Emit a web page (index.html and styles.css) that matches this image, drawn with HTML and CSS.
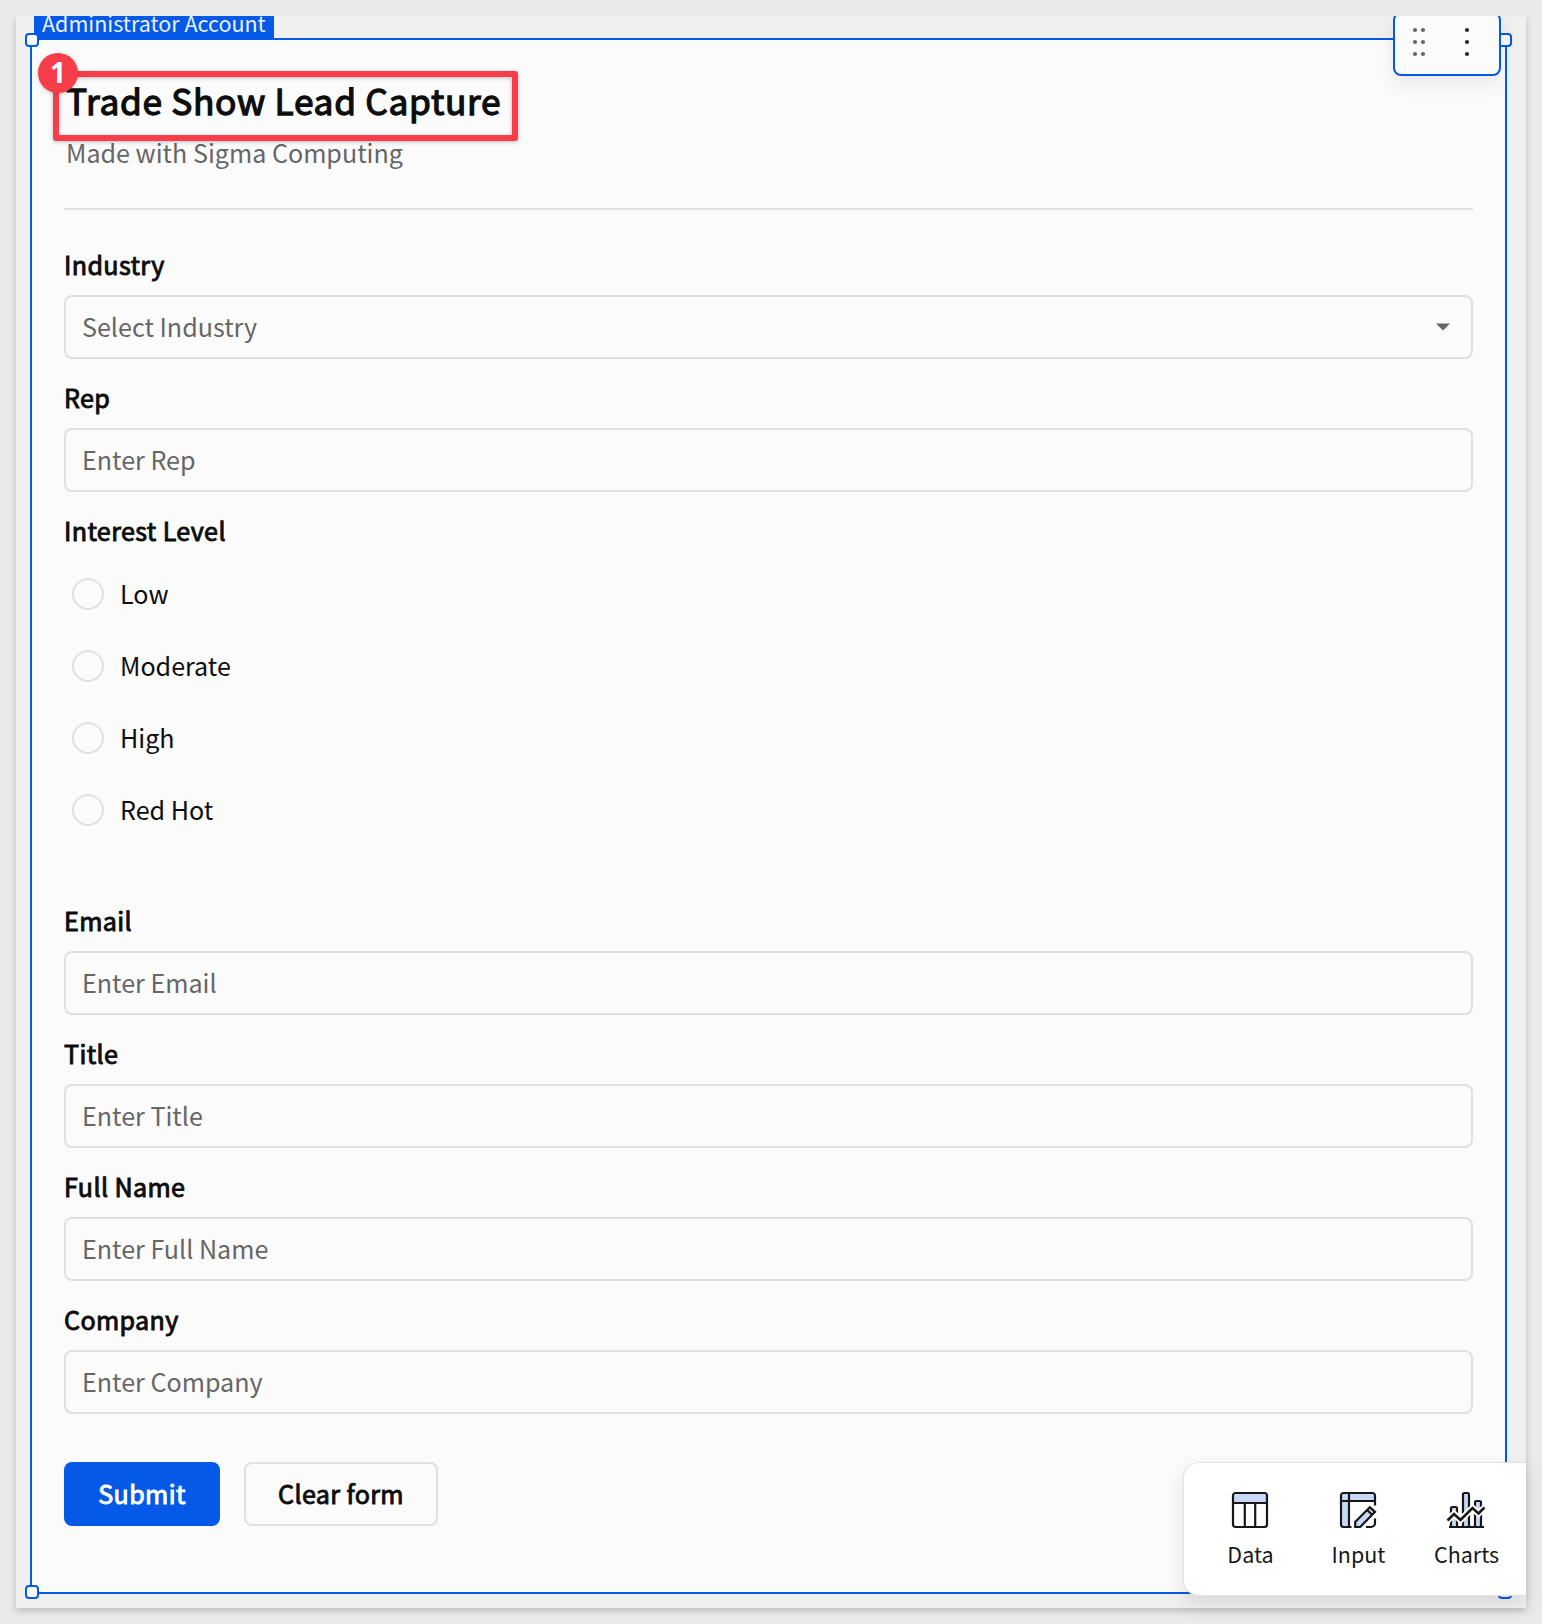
FILE: index.html
```html
<!DOCTYPE html>
<html lang="en">
<head>
<meta charset="utf-8">
<title>Trade Show Lead Capture</title>
<link rel="stylesheet" href="styles.css">
</head>
<body>
<main class="canvas">
  <div class="tag"><span class="tag-text">Administrator Account</span></div>
  <section class="panel">
    <span class="handle handle-tl"></span>
    <span class="handle handle-tr"></span>
    <span class="handle handle-bl"></span>
    <span class="handle handle-br"></span>

    <header class="head">
      <h1 class="title"><span>Trade Show Lead Capture</span></h1>
      <p class="subtitle"><span>Made with Sigma Computing</span></p>
    </header>

    <form class="form">
      <div class="field">
        <div class="label"><span>Industry</span></div>
        <div class="control"><span>Select Industry</span>
          <svg class="caret" width="14" height="8" viewBox="0 0 14 8"><path d="M0 0.500h14L7 7.500z" fill="#666"/></svg>
        </div>
      </div>
      <div class="field">
        <div class="label"><span>Rep</span></div>
        <div class="control"><span>Enter Rep</span></div>
      </div>
      <div class="field field-radios">
        <div class="label"><span>Interest Level</span></div>
        <div class="radios">
          <div class="radio"><i class="dot"></i><span>Low</span></div>
          <div class="radio"><i class="dot"></i><span>Moderate</span></div>
          <div class="radio"><i class="dot"></i><span>High</span></div>
          <div class="radio"><i class="dot"></i><span>Red Hot</span></div>
        </div>
      </div>
      <div class="field">
        <div class="label"><span>Email</span></div>
        <div class="control"><span>Enter Email</span></div>
      </div>
      <div class="field">
        <div class="label"><span>Title</span></div>
        <div class="control"><span>Enter Title</span></div>
      </div>
      <div class="field">
        <div class="label"><span>Full Name</span></div>
        <div class="control"><span>Enter Full Name</span></div>
      </div>
      <div class="field">
        <div class="label"><span>Company</span></div>
        <div class="control"><span>Enter Company</span></div>
      </div>
      <div class="actions">
        <button type="button" class="btn btn-primary"><span>Submit</span></button>
        <button type="button" class="btn btn-outline"><span>Clear form</span></button>
      </div>
    </form>
  </section>

  <div class="menu">
    <svg width="104" height="58" viewBox="0 0 104 58">
      <g fill="#666"><circle cx="20" cy="14" r="2.1"/><circle cx="28" cy="14" r="2.1"/><circle cx="20" cy="26" r="2.1"/><circle cx="28" cy="26" r="2.1"/><circle cx="20" cy="38" r="2.1"/><circle cx="28" cy="38" r="2.1"/></g>
      <g fill="#292929"><circle cx="72" cy="14" r="2.1"/><circle cx="72" cy="26" r="2.1"/><circle cx="72" cy="38" r="2.1"/></g>
    </svg>
  </div>

  <nav class="palette">
    <div class="tool">
      <svg class="icon" width="40" height="40" viewBox="0 0 40 40" fill="none" stroke="#171717" stroke-width="2.2">
        <path d="M3 13V5.500a2.500 2.500 0 0 1 2.500-2.500h29A2.500 2.500 0 0 1 37 5.500V13z" fill="#c8d8f8" stroke="none"/>
        <rect x="3" y="3" width="34" height="34" rx="2.500"/><path d="M3 13h34M14.800 13v24M25.200 13v24"/>
      </svg>
      <span>Data</span>
    </div>
    <div class="tool">
      <svg class="icon" width="40" height="40" viewBox="0 0 40 40" fill="none" stroke="#171717" stroke-width="2.2">
        <path d="M3 5.500A2.500 2.500 0 0 1 5.500 3h29A2.500 2.500 0 0 1 37 5.500V11H11v26H5.500A2.500 2.500 0 0 1 3 34.500z" fill="#c8d8f8" stroke="none"/>
        <path d="M37 15.500V5.500A2.500 2.500 0 0 0 34.500 3h-29A2.500 2.500 0 0 0 3 5.500v29A2.500 2.500 0 0 0 5.500 37H13.500M11 3v34M3 11h34M37 28.500V33a4 4 0 0 1-4 4H28"/>
        <path d="M17.200 37v-5L31.800 17.300l5.200 4.500L22.200 37z" fill="#c8d8f8"/><path d="M29 20l5.200 4.700"/>
      </svg>
      <span>Input</span>
    </div>
    <div class="tool">
      <svg class="icon" width="40" height="40" viewBox="0 0 40 40" fill="none" stroke="#171717" stroke-width="2.2">
        <path d="M5 37V18.500a1.500 1.500 0 0 1 1.500-1.500h3a1.500 1.500 0 0 1 1.500 1.500V37zM17 37V4.500A1.500 1.500 0 0 1 18.500 3h3A1.500 1.500 0 0 1 23 4.500V37zM29 37V12.500a1.500 1.500 0 0 1 1.500-1.500h3a1.500 1.500 0 0 1 1.500 1.500V37z" fill="#c8d8f8"/>
        <path d="M3 37h35"/>
        <path d="M0 32l8-8 6.500 6L26.500 18l6 5.500 7-7" stroke="#fff" stroke-width="6.500"/>
        <path d="M1.500 30.500L8 24l6.500 6L26.500 18l6 5.500 6-6" stroke-width="2.600"/>
      </svg>
      <span>Charts</span>
    </div>
  </nav>

  <div class="callout"></div>
  <div class="badge"><span>1</span></div>
</main>
</body>
</html>
```
FILE: styles.css
```css
* { box-sizing: border-box; }
body {
  margin: 0;
  padding: 16px;
  height: 1624px;
  background: #eaeaea;
  font-family: "Noto Sans CJK SC", "Noto Sans", sans-serif;
  font-size: 25.1px;
  line-height: 36px;
  color: #0d0d0d;
  overflow: hidden;
}
.canvas {
  position: relative;
  height: 1592px;
  padding: 22px 19px 14px 14px;
  background: #f0f0f0;
  box-shadow: 0 3px 7px rgba(0,0,0,.2);
  clip-path: inset(0 -16px -16px -16px);
}
.panel {
  position: relative;
  height: 1556px;
  padding: 0 32px;
  border: 2px solid #0559e7;
  background: #fbfbfb;
}
.handle {
  position: absolute;
  width: 14px;
  height: 14px;
  border: 2px solid #0559e7;
  border-radius: 4px;
  background: #fbfbfb;
}
.handle-tl { left: -7px; top: -7px; }
.handle-tr { right: -7px; top: -7px; }
.handle-bl { left: -7px; bottom: -7px; }
.handle-br { right: -7px; bottom: -7px; }
.tag {
  position: absolute;
  left: 18px;
  top: 0;
  width: 240px;
  height: 22px;
  padding-left: 8px;
  background: #0559e7;
  color: #e9f0fd;
  font-size: 21.5px;
  line-height: 14px;
  white-space: nowrap;
}
.head {
  height: 170px;
  padding: 32px 2px 0;
  border-bottom: 2px solid #e0e0e0;
}
/* Semibold drawn from the regular face with a thin outline */
.title, .label, .btn {
  font-weight: 400;
  letter-spacing: 0.015em;
  -webkit-text-stroke: 0.036em currentColor;
}
.title {
  margin: 0;
  font-size: 35.3px;
  line-height: 56px;
  letter-spacing: 0.019em;
}
.subtitle { margin: 6px 0 0; color: #666; }
.form { padding-top: 36px; }
.field { height: 133px; }
.field-radios { height: 390px; }
.label { height: 49px; }
.control {
  display: flex;
  align-items: center;
  justify-content: space-between;
  height: 64px;
  padding: 0 21px 2px 16px;
  border: 2px solid #e0e0e0;
  border-radius: 8px;
  color: #666;
}
.caret { margin-top: 2px; }
.radios { display: flex; flex-direction: column; gap: 40px; padding: 17px 8px 0; }
.radio { display: flex; align-items: center; gap: 16px; height: 32px; }
.radio span { padding-bottom: 2px; }
.dot { width: 32px; height: 32px; border: 2px solid #e0e0e0; border-radius: 50%; }
.actions { display: flex; gap: 24px; padding-top: 28px; }
.btn {
  height: 64px;
  padding: 0 0 2px;
  border: 2px solid #e0e0e0;
  border-radius: 8px;
  background: #fbfbfb;
  color: #0d0d0d;
  font-family: inherit;
  font-size: inherit;
  line-height: inherit;
}
.btn-primary { width: 156px; border-color: #0559e7; background: #0559e7; color: #fff; }
.btn-outline { width: 194px; }
.menu {
  position: absolute;
  left: 1377px;
  top: -4px;
  width: 108px;
  height: 64px;
  padding-top: 2px;
  border: 2px solid #0559e7;
  border-radius: 8px;
  background: #fbfbfb;
  box-shadow: 0 8px 20px rgba(0,0,0,.08);
}
.menu svg { display: block; }
.palette {
  position: absolute;
  left: 1167px;
  top: 1446px;
  right: 0;
  height: 134px;
  display: flex;
  padding: 27px 0 0 12px;
  border: 1px solid #e2e2e2;
  border-right: 0;
  border-radius: 16px 0 0 16px;
  background: #fff;
  box-shadow: 0 8px 20px rgba(0,0,0,.1);
  font-size: 21.5px;
  line-height: 32px;
  color: #171717;
}
.tool { width: 108px; display: flex; flex-direction: column; align-items: center; gap: 8px; }
.tool span { padding-left: 1px; }
.callout {
  position: absolute;
  left: 37px;
  top: 55px;
  width: 465px;
  height: 70px;
  border: 6px solid #f83d4a;
  border-radius: 3px;
  filter: drop-shadow(0 1px 2px rgba(0,0,0,.25));
}
.badge {
  position: absolute;
  left: 22px;
  top: 37px;
  width: 40px;
  height: 40px;
  border-radius: 50%;
  background: #f83d4a;
  box-shadow: 0 1px 4px rgba(0,0,0,.2);
  color: #fff;
  font-family: "Open Sans", "Noto Sans", sans-serif;
  font-size: 28px;
  font-weight: 700;
  line-height: 38px;
  text-align: center;
}
```
